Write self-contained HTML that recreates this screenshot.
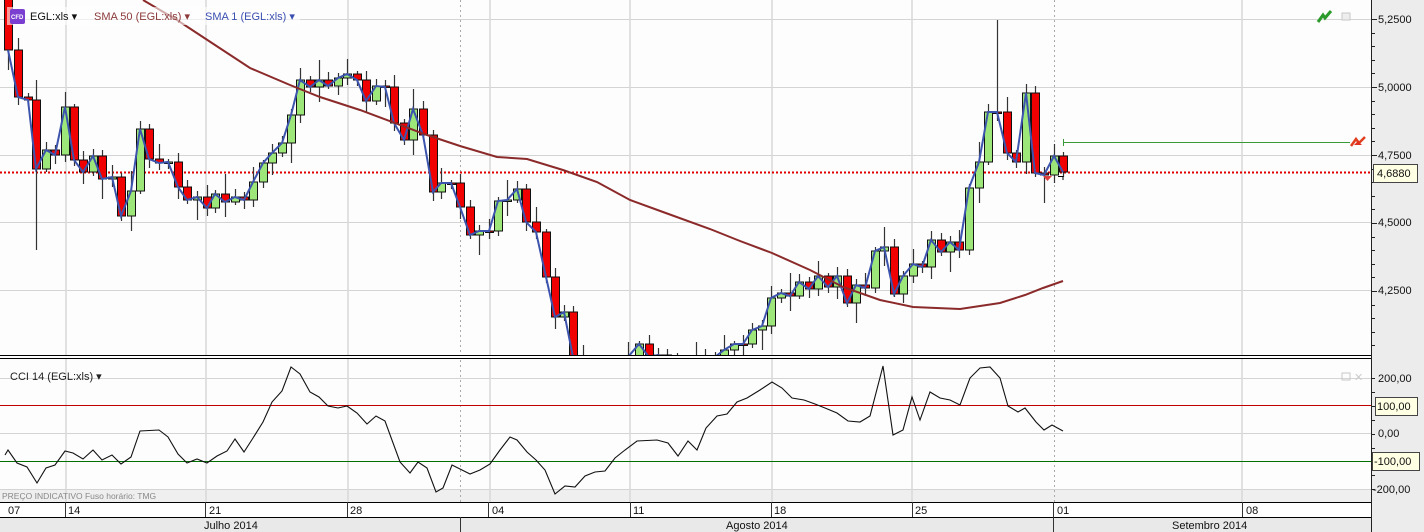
<!DOCTYPE html>
<html><head><meta charset="utf-8">
<style>
body{margin:0;width:1424px;height:532px;overflow:hidden;background:#fdfdfd;font-family:"Liberation Sans","DejaVu Sans",sans-serif;}
svg{display:block}
</style></head><body>
<svg id="s" width="1424" height="532" xmlns="http://www.w3.org/2000/svg" font-family="Liberation Sans, DejaVu Sans, sans-serif">
<defs><clipPath id="cp"><rect x="0" y="0" width="1371" height="355"/></clipPath></defs>
<rect x="0" y="0" width="1424" height="532" fill="#fdfdfd"/>
<rect x="1371" y="0" width="53" height="532" fill="#ececec"/>
<rect x="0" y="489" width="1371" height="13" fill="#efefef"/>
<g stroke="#d4d4d4" stroke-width="1">
<line x1="0" y1="19.5" x2="1371" y2="19.5"/><line x1="0" y1="87.5" x2="1371" y2="87.5"/>
<line x1="0" y1="155.5" x2="1371" y2="155.5"/><line x1="0" y1="222.5" x2="1371" y2="222.5"/>
<line x1="0" y1="290.5" x2="1371" y2="290.5"/>
<line x1="0" y1="378.5" x2="1371" y2="378.5"/><line x1="0" y1="433.5" x2="1371" y2="433.5"/>
<line x1="0" y1="489.5" x2="1371" y2="489.5"/>
</g>
<g stroke="#d8d8d8" stroke-width="1.5">
<line x1="66" y1="0" x2="66" y2="502"/><line x1="206" y1="0" x2="206" y2="502"/>
<line x1="348" y1="0" x2="348" y2="502"/><line x1="490" y1="0" x2="490" y2="502"/>
<line x1="630" y1="0" x2="630" y2="502"/><line x1="772" y1="0" x2="772" y2="502"/>
<line x1="912" y1="0" x2="912" y2="502"/><line x1="1242" y1="0" x2="1242" y2="502"/>
</g>
<g stroke="#aaa" stroke-width="1" stroke-dasharray="2,3">
<line x1="460.5" y1="0" x2="460.5" y2="502"/><line x1="1054.5" y1="0" x2="1054.5" y2="502"/>
</g>
<g id="price" clip-path="url(#cp)"></g>
<rect x="0" y="355" width="1371" height="4" fill="#fdfdfd"/>
<line x1="0" y1="355.5" x2="1371" y2="355.5" stroke="#000"/>
<line x1="0" y1="358.5" x2="1371" y2="358.5" stroke="#000"/>
<line x1="0" y1="405.5" x2="1371" y2="405.5" stroke="#c00000"/>
<line x1="0" y1="461.5" x2="1371" y2="461.5" stroke="#007000"/>
<polyline fill="none" stroke="#111" stroke-width="1.1" points="5,455 8,450 17,463 27,467 37,483 46,468 55,465 65,451 73,453 83,459 93,450 102,460 112,455 121,464 131,457 140,431 159,430 168,437 178,454 187,463 197,459 207,463 217,456 227,451 235,439 244,452 253,438 263,422 272,402 282,391 291,367 300,374 310,392 319,397 328,406 338,408 347,406 357,413 367,424 376,416 385,421 400,462 410,473 418,462 427,468 436,492 443,488 452,465 462,470 470,474 480,470 490,464 500,450 510,437 517,440 527,452 536,460 545,470 555,494 565,486 575,487 585,476 595,472 605,471 615,458 625,450 637,441 657,440 668,443 678,456 688,441 697,450 706,428 717,416 727,414 737,402 747,398 760,390 772,382 782,388 792,398 804,400 815,404 825,408 837,413 848,421 860,422 870,416 883,366 893,435 903,430 912,397 920,420 930,392 940,398 950,400 960,405 970,378 980,368 990,367 1000,378 1008,406 1018,412 1025,408 1036,422 1044,430 1052,425 1063,431"/>
<text x="10" y="380" font-size="11" fill="#222">CCI 14 (EGL:xls) ▾</text>
<rect x="1342" y="373" width="8" height="7" fill="none" stroke="#c8c8c8"/>
<text x="1354" y="381" font-size="11" fill="#ccc">✕</text>
<text x="2" y="499" font-size="8.5" fill="#888">PREÇO INDICATIVO   Fuso horário: TMG</text>
<rect x="0" y="502" width="1371" height="15" fill="#fff"/>
<rect x="0" y="517" width="1371" height="15" fill="#e9e9e9"/>
<line x1="0" y1="502.5" x2="1371" y2="502.5" stroke="#000"/>
<line x1="0" y1="517.5" x2="1371" y2="517.5" stroke="#000"/>
<g stroke="#333" stroke-width="1">
<line x1="65.5" y1="502" x2="65.5" y2="517"/><line x1="205.5" y1="502" x2="205.5" y2="517"/>
<line x1="347.5" y1="502" x2="347.5" y2="517"/><line x1="488.5" y1="502" x2="488.5" y2="517"/>
<line x1="630.5" y1="502" x2="630.5" y2="517"/><line x1="771.5" y1="502" x2="771.5" y2="517"/>
<line x1="912.5" y1="502" x2="912.5" y2="517"/><line x1="1053.5" y1="502" x2="1053.5" y2="532"/>
<line x1="1242.5" y1="502" x2="1242.5" y2="517"/><line x1="460.5" y1="517" x2="460.5" y2="532"/>
</g>
<g font-size="11" fill="#111">
<text x="8" y="514">07</text><text x="68" y="514">14</text><text x="209" y="514">21</text>
<text x="350" y="514">28</text><text x="492" y="514">04</text><text x="633" y="514">11</text>
<text x="774" y="514">18</text><text x="915" y="514">25</text><text x="1057" y="514">01</text>
<text x="1246" y="514">08</text>
<text x="204" y="529">Julho 2014</text><text x="726" y="529">Agosto 2014</text><text x="1172" y="529">Setembro 2014</text>
</g>
<line x1="1371.5" y1="0" x2="1371.5" y2="532" stroke="#222"/>
<g id="ticks" stroke="#222"></g>
<g font-size="11" fill="#111">
<text x="1378" y="23">5,2500</text><text x="1378" y="91">5,0000</text><text x="1378" y="159">4,7500</text>
<text x="1378" y="226">4,5000</text><text x="1378" y="294">4,2500</text>
<text x="1378" y="382">200,00</text><text x="1378" y="437">0,00</text><text x="1373" y="493">-200,00</text>
</g>
<rect x="1373.5" y="164.5" width="44" height="18" fill="#ffffe4" stroke="#444"/>
<text x="1377" y="177" font-size="11" fill="#111">4,6880</text>
<rect x="1375.5" y="397.5" width="42" height="18" fill="#ffffe4" stroke="#444"/>
<text x="1377" y="410" font-size="11" fill="#111">100,00</text>
<rect x="1372.5" y="452.5" width="47" height="18" fill="#ffffe4" stroke="#444"/>
<text x="1374" y="465" font-size="11" fill="#111">-100,00</text>
<rect x="7" y="7" width="293" height="18" fill="#fff" opacity="0.6"/>
<rect x="10" y="9" width="15" height="15" fill="#7a3fd0" rx="2"/>
<text x="11" y="19" font-size="6" fill="#fff" font-weight="bold">CFD</text>
<text x="30" y="20" font-size="11" fill="#111">EGL:xls ▾</text>
<text x="94" y="20" font-size="11" fill="#8b3a3a">SMA 50 (EGL:xls) ▾</text>
<text x="205" y="20" font-size="11" fill="#3a4fb0">SMA 1 (EGL:xls) ▾</text>
<path d="M1318 22 L1323 15 L1325 18 L1331 11" stroke="#2a9a2a" stroke-width="3" fill="none"/>
<rect x="1342" y="13" width="8" height="7" fill="#eee" stroke="#c8c8c8"/>
<path d="M1351 146 L1356 139 L1359 143 L1365 137" stroke="#e04020" stroke-width="2.5" fill="none"/>
<path d="M1354 145 L1358 141 L1362 145 Z" fill="#e03020"/>
</svg>
<script>
(function(){
var NS="http://www.w3.org/2000/svg";
function el(t,a,p){var e=document.createElementNS(NS,t);for(var k in a)e.setAttribute(k,a[k]);p.appendChild(e);return e;}
var g=document.getElementById("price");
var d=[[8,50],[18,97],[28,100],[36,169],[46,150],[55,155],[65,107],[74,160],[83,172],[93,156],[102,179],[112,177],[121,216],[131,191],[140,129],[149,159],[159,163],[168,162],[178,187],[187,200],[197,197],[207,208],[215,194],[225,202],[235,197],[244,200],[253,182],[263,163],[272,153],[282,143],[291,115],[300,80],[310,87],[319,80],[328,86],[338,78],[347,74],[357,80],[366,101],[376,86],[385,87],[394,123],[404,140],[413,109],[423,135],[433,192],[441,183],[451,183],[460,207],[470,235],[479,231],[489,231],[498,201],[507,200],[517,189],[526,222],[536,232],[546,277],[555,317],[564,312],[573,357],[583,390],[592,410],[601,400],[610,395],[619,380],[628,357],[639,344],[649,357],[658,355],[667,365],[677,370],[686,365],[696,362],[705,357],[715,357],[724,350],[734,344],[743,344],[752,330],[762,326],[771,298],[781,293],[790,296],[799,282],[809,289],[818,276],[828,287],[837,276],[847,303],[856,285],[865,288],[875,251],[884,247],[894,294],[903,276],[913,264],[922,267],[931,240],[941,252],[950,242],[959,250],[969,188],[979,162],[988,112],[997,112],[1007,153],[1016,162],[1026,93],[1035,173],[1044,175],[1054,156],[1063,172]];
el("line",{x1:0,y1:172.5,x2:1371,y2:172.5,stroke:"#e00000","stroke-width":2,"stroke-dasharray":"2,2"},g);
el("line",{x1:1063,y1:142.5,x2:1350,y2:142.5,stroke:"#3a9a3a"},g);
var prev=-20,wk=[6,12,4,20,8,5,15,3,9,7];
var bars=el("g",{},g);
for(var i=0;i<d.length;i++){
 var x=d[i][0],c=d[i][1],o=prev;prev=c;
 var t0=Math.min(o,c),b0=Math.max(o,c);
 var hi=t0-wk[i%10],lo=b0+wk[(i+3)%10];
 if(x==36)lo=250; if(x==997)hi=20; if(x==1044)lo=203;
 el("line",{x1:x+0.5,y1:hi,x2:x+0.5,y2:lo,stroke:"#333","stroke-width":1.2},bars);
 var h=Math.max(b0-t0,1.5);
 el("rect",{x:x-3.5,y:t0,width:8,height:h,fill:c<o?"#9de67a":"#f00000",stroke:"#111","stroke-width":1},bars);
}
var pts=d.map(function(p){return p.join(",")}).join(" ");
el("polyline",{points:pts,fill:"none",stroke:"#3c54ad","stroke-width":2},g);
el("polyline",{points:"143,0 177,20 215,45 250,68 290,85 320,97 360,110 427,135 460,146 497,157 527,159 563,170 597,182 630,200 663,212 710,229 740,241 772,253 810,270 843,287 880,300 913,307 960,309 1000,303 1025,295 1043,288 1063,281",fill:"none",stroke:"#8b2a2a","stroke-width":2},g);
el("path",{d:"M1043 176 L1052 176 L1047.5 181 Z",fill:"#e04040"},g);
el("path",{d:"M1058 176.5 H1063 V180",stroke:"#000",fill:"none"},g);
el("path",{d:"M1063.5 139 V146",stroke:"#3a9a3a",fill:"none"},g);
var tk=document.getElementById("ticks");
for(var k=0;k<25;k++){var y=Math.round(19+k*13.6);if(y>355)break;el("line",{x1:1371,y1:y+.5,x2:(k%5==0)?1377:1375,y2:y+.5},tk);}
for(var k=0;k<9;k++){var y=Math.round(378+k*13.9);el("line",{x1:1371,y1:y+.5,x2:1375,y2:y+.5},tk);}
})();
</script>
</body></html>
